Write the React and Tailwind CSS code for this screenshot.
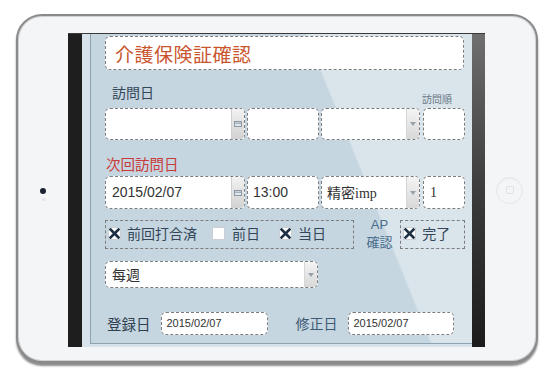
const jp = "font-['Noto_Sans_CJK_JP','Liberation_Sans',sans-serif]";

function CalBtn() {
  return (
    <div className="w-[13px] h-full flex-shrink-0 bg-gradient-to-b from-[#f2f2f2] to-[#d2d2d2] border-l border-[#cfcfcf] flex items-center justify-center">
      <svg width="8" height="6" viewBox="0 0 8 6">
        <rect x="0.5" y="0.5" width="7" height="5" fill="#e2e7ec" stroke="#8b98a6" />
        <line x1="0" y1="2.2" x2="8" y2="2.2" stroke="#8b98a6" />
      </svg>
    </div>
  );
}

function ArrowBtn() {
  return (
    <div className="w-[13px] h-full flex-shrink-0 bg-gradient-to-b from-[#f4f4f4] to-[#d8d8d8] border-l border-[#d6d6d6] flex items-center justify-center">
      <svg width="6" height="4" viewBox="0 0 6 4">
        <path d="M0 0 L6 0 L3 4 Z" fill="#9aa3ab" />
      </svg>
    </div>
  );
}

function Box({ className = "", children }) {
  return (
    <div className={"bg-white border border-dashed border-[#7d7d7d] rounded-[5px] overflow-hidden flex items-center " + className}>
      {children}
    </div>
  );
}

function Check({ on }) {
  return (
    <span className="w-[13px] h-[13px] bg-white border border-[#c9cfd4] flex items-center justify-center flex-shrink-0">
      {on && (
        <svg width="11" height="11" viewBox="0 0 11 11">
          <path d="M1.5 1.5 L9.5 9.5 M9.5 1.5 L1.5 9.5" stroke="#1c2f45" strokeWidth="2.6" strokeLinecap="square" />
        </svg>
      )}
    </span>
  );
}

export default function App() {
  return (
    <div className="w-[560px] h-[381px] bg-white pt-[14px] pl-[16px]">
      <div className="w-[522px] h-[349px] rounded-[26px] border-2 border-[#8a8a8a] bg-[#f4f5f7] shadow-[inset_0_0_0_1px_#cfd2d5,0_3px_2px_rgba(0,0,0,0.45)] pt-[17px] flex">
        {/* left bezel with camera */}
        <div className="w-[50px] h-[314px] flex flex-col items-center justify-center gap-[4px] pt-[8px]">
          <span className="w-[6px] h-[6px] rounded-full bg-[#1a2233]" />
          <span className="w-[3px] h-[3px] rounded-full bg-[#dde1e6]" />
        </div>

        {/* screen */}
        <div className="w-[417px] h-[314px] flex border-t border-[#3a3a3a] bg-[#1e1e1e]">
          <div className="w-[14px] bg-[#1e1e1e]" />
          <div className="w-[390px] bg-[#d7e2ea] pl-[8px] pb-[3px]">
            <div className={"w-[382px] h-full border-l border-b border-[#8ea3b1] bg-[linear-gradient(68deg,#c6d6e0_67%,#d9e4eb_67.4%)] pl-[14px] pr-[7px] flex flex-col " + jp}>
              {/* title */}
              <Box className="mt-[2px] h-[34px] w-[359px] px-[9px]">
                <span className="text-[19px] leading-none text-[#c9552e] tracking-[0.5px]">介護保険証確認</span>
              </Box>

              {/* label row */}
              <div className="h-[38px] flex items-end justify-between">
                <span className="ml-[7px] mb-[6px] text-[14px] leading-[20px] text-[#34475a]">訪問日</span>
                <span className="mr-[13px] mb-[3px] text-[10px] leading-[12px] text-[#6b7885]">訪問順</span>
              </div>

              {/* row 1 */}
              <div className="h-[32px] flex gap-[2px]">
                <Box className="w-[140px] h-full justify-end"><CalBtn /></Box>
                <Box className="w-[72px] h-full" />
                <Box className="w-[99px] h-full justify-end"><ArrowBtn /></Box>
                <Box className="w-[42px] h-full ml-[1px]" />
              </div>

              {/* next visit label */}
              <div className="h-[36px] flex items-end">
                <span className="ml-[1px] mb-[2px] text-[14.5px] leading-[20px] text-[#c93a3a]">次回訪問日</span>
              </div>

              {/* row 2 */}
              <div className="h-[33px] flex gap-[2px]">
                <Box className="w-[140px] h-full justify-between">
                  <span className="pl-[6px] text-[14px] text-[#333] font-['Liberation_Sans',sans-serif]">2015/02/07</span>
                  <CalBtn />
                </Box>
                <Box className="w-[72px] h-full">
                  <span className="pl-[5px] text-[14px] text-[#333] font-['Liberation_Sans',sans-serif]">13:00</span>
                </Box>
                <Box className="w-[99px] h-full justify-between">
                  <span className="pl-[5px] text-[14px] text-[#333]">精密<span className="font-['Liberation_Serif',serif]">imp</span></span>
                  <ArrowBtn />
                </Box>
                <Box className="w-[42px] h-full ml-[1px]">
                  <span className="pl-[6px] text-[14px] text-[#333] font-['Liberation_Serif',serif]">1</span>
                </Box>
              </div>

              {/* checkbox row */}
              <div className="mt-[11px] h-[29px] flex items-start">
                <div className="w-[250px] h-[29px] border border-dashed border-[#7d7d7d] flex items-center pl-[2px] pb-[3px] text-[14px] text-[#34475a]">
                  <Check on />
                  <span className="ml-[6px]">前回打合済</span>
                  <span className="ml-[15px]"><Check /></span>
                  <span className="ml-[7px]">前日</span>
                  <span className="ml-[19px]"><Check on /></span>
                  <span className="ml-[6px]">当日</span>
                </div>
                <div className="ml-[10px] w-[32px] flex flex-col items-center text-[#4a6d8e] leading-[17px] -mt-[4px]">
                  <span className="text-[13px] font-['Liberation_Sans',sans-serif]">AP</span>
                  <span className="text-[13px]">確認</span>
                </div>
                <div className="ml-[5px] w-[65px] h-[29px] border border-dashed border-[#7d7d7d] flex items-center pl-[2px] pb-[3px] text-[14px] text-[#34475a]">
                  <Check on />
                  <span className="ml-[6px]">完了</span>
                </div>
              </div>

              {/* select */}
              <Box className="mt-[12px] w-[213px] h-[27px] justify-between">
                <span className="pl-[6px] text-[14px] text-[#333]">每週</span>
                <ArrowBtn />
              </Box>

              {/* dates */}
              <div className="mt-[24px] flex items-center">
                <span className="ml-[2px] text-[14.5px] text-[#2e3f50]">登録日</span>
                <Box className="ml-[10px] w-[107px] h-[23px]">
                  <span className="pl-[5px] text-[11px] text-[#333] font-['Liberation_Sans',sans-serif]">2015/02/07</span>
                </Box>
                <span className="ml-[28px] text-[14px] text-[#3d5a74]">修正日</span>
                <Box className="ml-[10px] w-[106px] h-[23px]">
                  <span className="pl-[5px] text-[11px] text-[#333] font-['Liberation_Sans',sans-serif]">2015/02/07</span>
                </Box>
              </div>
            </div>
          </div>
          <div className="w-[13px] bg-gradient-to-b from-[#6f6f6f] via-[#3c3c3c] to-[#1c1c1c]" />
        </div>

        {/* right bezel with home button */}
        <div className="flex-1 h-[314px] flex items-center justify-center pr-[2px]">
          <div className="w-[27px] h-[27px] rounded-full border border-[#e3e6e9] shadow-[inset_0_1px_2px_rgba(0,0,0,0.04)] flex items-center justify-center">
            <span className="w-[8px] h-[8px] rounded-[2px] border border-[#dfe2e6]" />
          </div>
        </div>
      </div>
    </div>
  );
}
